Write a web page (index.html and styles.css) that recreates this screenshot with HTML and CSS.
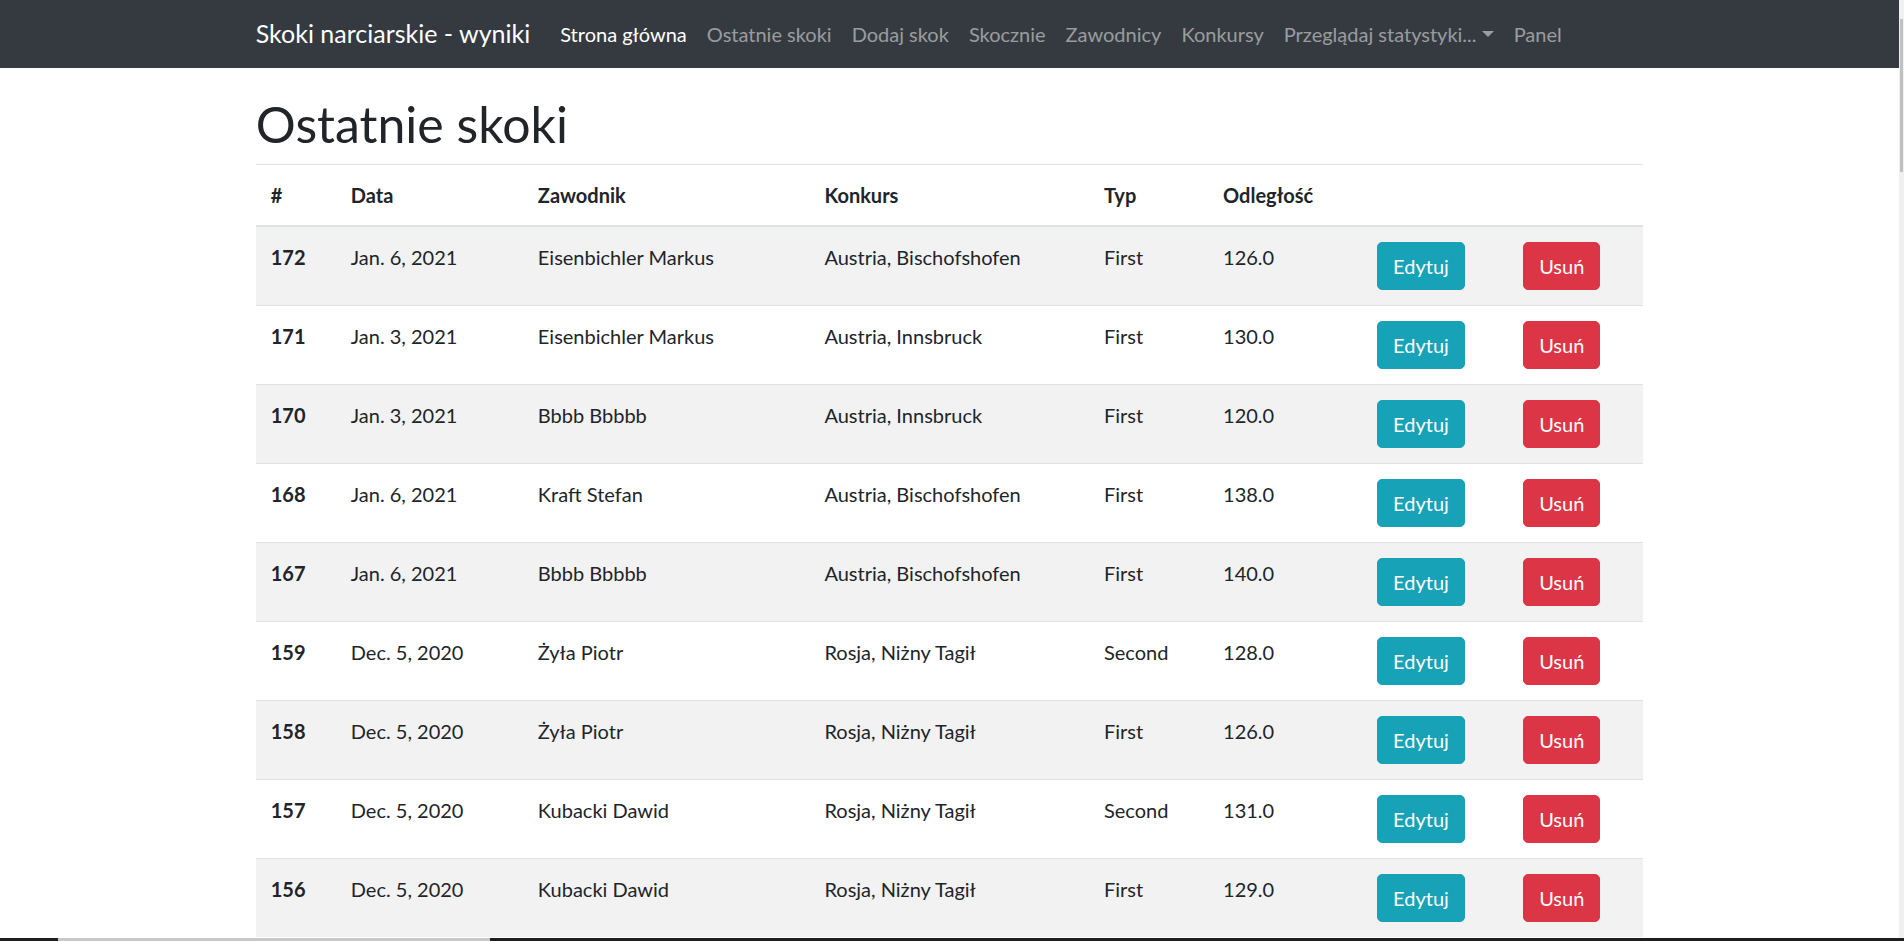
FILE: index.html
```html
<!DOCTYPE html>
<html lang="pl">
<head>
<meta charset="utf-8">
<title>Ostatnie skoki</title>
<link rel="stylesheet" href="styles.css">
</head>
<body>
<nav class="navbar">
  <div class="container nav-inner">
    <a class="brand" href="#">Skoki narciarskie - wyniki</a>
    <ul class="nav">
      <li><a class="nav-link active" href="#">Strona główna</a></li>
      <li><a class="nav-link" href="#">Ostatnie skoki</a></li>
      <li><a class="nav-link" href="#">Dodaj skok</a></li>
      <li><a class="nav-link" href="#">Skocznie</a></li>
      <li><a class="nav-link" href="#">Zawodnicy</a></li>
      <li><a class="nav-link" href="#">Konkursy</a></li>
      <li><a class="nav-link dropdown-toggle" href="#">Przeglądaj statystyki...</a></li>
      <li><a class="nav-link" href="#">Panel</a></li>
    </ul>
  </div>
</nav>
<main class="container">
  <h1 class="title">Ostatnie skoki</h1>
  <table class="table">
    <colgroup>
      <col class="c-id"><col class="c-date"><col class="c-name"><col class="c-comp"><col class="c-type"><col class="c-dist"><col class="c-edit"><col class="c-del">
    </colgroup>
    <thead>
      <tr><th>#</th><th>Data</th><th>Zawodnik</th><th>Konkurs</th><th>Typ</th><th>Odległość</th><th></th><th></th></tr>
    </thead>
    <tbody>
      <tr><th>172</th><td>Jan. 6, 2021</td><td>Eisenbichler Markus</td><td>Austria, Bischofshofen</td><td>First</td><td>126.0</td><td><a class="btn btn-info" href="#">Edytuj</a></td><td><a class="btn btn-danger" href="#">Usuń</a></td></tr>
      <tr><th>171</th><td>Jan. 3, 2021</td><td>Eisenbichler Markus</td><td>Austria, Innsbruck</td><td>First</td><td>130.0</td><td><a class="btn btn-info" href="#">Edytuj</a></td><td><a class="btn btn-danger" href="#">Usuń</a></td></tr>
      <tr><th>170</th><td>Jan. 3, 2021</td><td>Bbbb Bbbbb</td><td>Austria, Innsbruck</td><td>First</td><td>120.0</td><td><a class="btn btn-info" href="#">Edytuj</a></td><td><a class="btn btn-danger" href="#">Usuń</a></td></tr>
      <tr><th>168</th><td>Jan. 6, 2021</td><td>Kraft Stefan</td><td>Austria, Bischofshofen</td><td>First</td><td>138.0</td><td><a class="btn btn-info" href="#">Edytuj</a></td><td><a class="btn btn-danger" href="#">Usuń</a></td></tr>
      <tr><th>167</th><td>Jan. 6, 2021</td><td>Bbbb Bbbbb</td><td>Austria, Bischofshofen</td><td>First</td><td>140.0</td><td><a class="btn btn-info" href="#">Edytuj</a></td><td><a class="btn btn-danger" href="#">Usuń</a></td></tr>
      <tr><th>159</th><td>Dec. 5, 2020</td><td>Żyła Piotr</td><td>Rosja, Niżny Tagił</td><td>Second</td><td>128.0</td><td><a class="btn btn-info" href="#">Edytuj</a></td><td><a class="btn btn-danger" href="#">Usuń</a></td></tr>
      <tr><th>158</th><td>Dec. 5, 2020</td><td>Żyła Piotr</td><td>Rosja, Niżny Tagił</td><td>First</td><td>126.0</td><td><a class="btn btn-info" href="#">Edytuj</a></td><td><a class="btn btn-danger" href="#">Usuń</a></td></tr>
      <tr><th>157</th><td>Dec. 5, 2020</td><td>Kubacki Dawid</td><td>Rosja, Niżny Tagił</td><td>Second</td><td>131.0</td><td><a class="btn btn-info" href="#">Edytuj</a></td><td><a class="btn btn-danger" href="#">Usuń</a></td></tr>
      <tr><th>156</th><td>Dec. 5, 2020</td><td>Kubacki Dawid</td><td>Rosja, Niżny Tagił</td><td>First</td><td>129.0</td><td><a class="btn btn-info" href="#">Edytuj</a></td><td><a class="btn btn-danger" href="#">Usuń</a></td></tr>
    </tbody>
  </table>
</main>
<div class="scrollbar"><div class="scroll-thumb"></div></div>
<div class="taskbar-edge"></div>
</body>
</html>
```
FILE: styles.css
```css
* { box-sizing: border-box; }
html, body { margin: 0; height: 100%; overflow: hidden; }
body {
  font-family: Lato, "Open Sans", sans-serif;
  font-size: 20px;
  line-height: 30px;
  color: #212529;
  background: #fff;
  padding-right: 5px;
}
.container {
  width: 1425px;
  margin: 0 auto;
  padding: 0 18.75px;
}
.navbar { background: #343a40; height: 68px; }
.nav-inner { display: flex; align-items: center; height: 100%; }
.brand {
  font-size: 25px;
  line-height: 37.5px;
  color: #fff;
  text-decoration: none;
  margin-right: 20px;
  white-space: nowrap;
}
.nav { display: flex; list-style: none; margin: 0; padding: 0; }
.nav-link {
  display: block;
  padding: 10px;
  color: rgba(255, 255, 255, 0.5);
  text-decoration: none;
  white-space: nowrap;
}
.nav-link.active { color: #fff; }
.dropdown-toggle::after {
  content: "";
  display: inline-block;
  margin-left: 5.1px;
  vertical-align: 5.1px;
  border-top: 6px solid;
  border-left: 6px solid transparent;
  border-right: 6px solid transparent;
}
.title {
  font-size: 50px;
  line-height: 60px;
  font-weight: 400;
  margin: 26px 0 10px;
}
.table { width: 100%; border-collapse: collapse; table-layout: fixed; }
.c-id { width: 80px; }
.c-date { width: 187px; }
.c-name { width: 286.5px; }
.c-comp { width: 279.5px; }
.c-type { width: 119px; }
.c-dist { width: 154px; }
.c-edit { width: 146px; }
.c-del { width: 135px; }
.table th, .table td {
  padding: 15px;
  text-align: left;
  vertical-align: top;
  border-top: 1px solid #dee2e6;
  white-space: nowrap;
}
.table th { font-weight: 700; }
.table thead th { vertical-align: bottom; border-bottom: 2px solid #dee2e6; }
.table tbody tr:nth-child(odd) { background: #f2f2f2; }
.btn {
  display: inline-block;
  vertical-align: top;
  padding: 8px 15px;
  border: 1px solid transparent;
  border-radius: 5px;
  font-size: 20px;
  line-height: 30px;
  color: #fff;
  text-decoration: none;
}
.btn-info { background: #17a2b8; border-color: #17a2b8; }
.btn-danger { background: #dc3545; border-color: #dc3545; }
.scrollbar {
  position: fixed;
  top: 0;
  right: 0;
  width: 5px;
  height: 100%;
  background: #f0f0f0;
}
.scroll-thumb {
  position: absolute;
  top: 19px;
  left: 1px;
  width: 3px;
  height: 153px;
  background: #c1c1c1;
}
.taskbar-edge {
  position: fixed;
  left: 0;
  right: 0;
  bottom: 0;
  height: 3px;
  background: linear-gradient(to right, #1f1f1f 0 58px, #c8c8c8 58px 490px, #1e1e1e 490px 100%);
}
```
